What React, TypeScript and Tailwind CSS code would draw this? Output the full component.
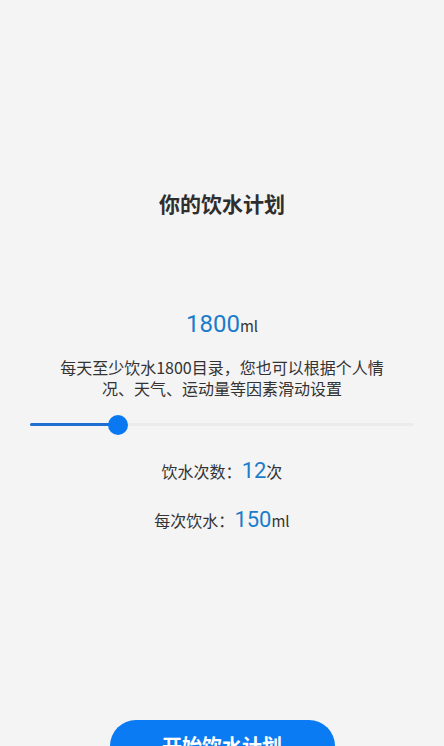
import { useState } from 'react';

export default function App() {
  const [amount] = useState(1800);
  const times = 12;
  const per = Math.round(amount / times);
  const pct = 23;

  return (
    <div
      className="flex h-[746px] w-full flex-col items-center overflow-hidden bg-[#f4f4f4] text-[#333333]"
      style={{ fontFamily: '"Noto Sans CJK SC", "Noto Sans", sans-serif' }}
    >
      <h1 className="mt-[189px] text-[21px] font-bold leading-[28px] text-[#2e2e2e]">你的饮水计划</h1>

      <div className="mt-[91px] flex items-baseline leading-[32px]">
        <span className="text-[24px] text-[#1b7ccc]" style={{ fontFamily: 'Roboto, sans-serif' }}>
          {amount}
        </span>
        <span className="text-[15px] text-[#333]">ml</span>
      </div>

      <p className="mt-[15px] text-center text-[16px] leading-[21px] text-[#333]">
        每天至少饮水{amount}目录，您也可以根据个人情
        <br />
        况、天气、运动量等因素滑动设置
      </p>

      <div className="mt-[24px] flex h-[20px] w-full items-center px-[30px]">
        <div className="relative h-[3px] w-full rounded-full bg-[#ebebeb]">
          <div className="absolute left-0 top-0 h-[3px] rounded-full bg-[#1c6fd1]" style={{ width: `${pct}%` }} />
          <div
            className="absolute top-1/2 h-[20px] w-[20px] -translate-x-1/2 -translate-y-1/2 rounded-full bg-[#0a78f0]"
            style={{ left: `${pct}%` }}
          />
        </div>
      </div>

      <div className="mt-[30px] flex items-baseline leading-[30px]">
        <span className="text-[16px]">饮水次数：</span>
        <span className="text-[22px] text-[#1b7ccc]" style={{ fontFamily: 'Roboto, sans-serif' }}>
          {times}
        </span>
        <span className="text-[16px]">次</span>
      </div>

      <div className="mt-[19px] flex items-baseline leading-[30px]">
        <span className="text-[16px]">每次饮水：</span>
        <span className="text-[22px] text-[#1b7ccc]" style={{ fontFamily: 'Roboto, sans-serif' }}>
          {per}
        </span>
        <span className="text-[15px]">ml</span>
      </div>

      <button
        type="button"
        className="mt-[184px] h-[52px] w-[225px] shrink-0 rounded-full bg-[#0b7bf3] text-[20px] font-bold text-white"
      >
        开始饮水计划
      </button>
    </div>
  );
}
